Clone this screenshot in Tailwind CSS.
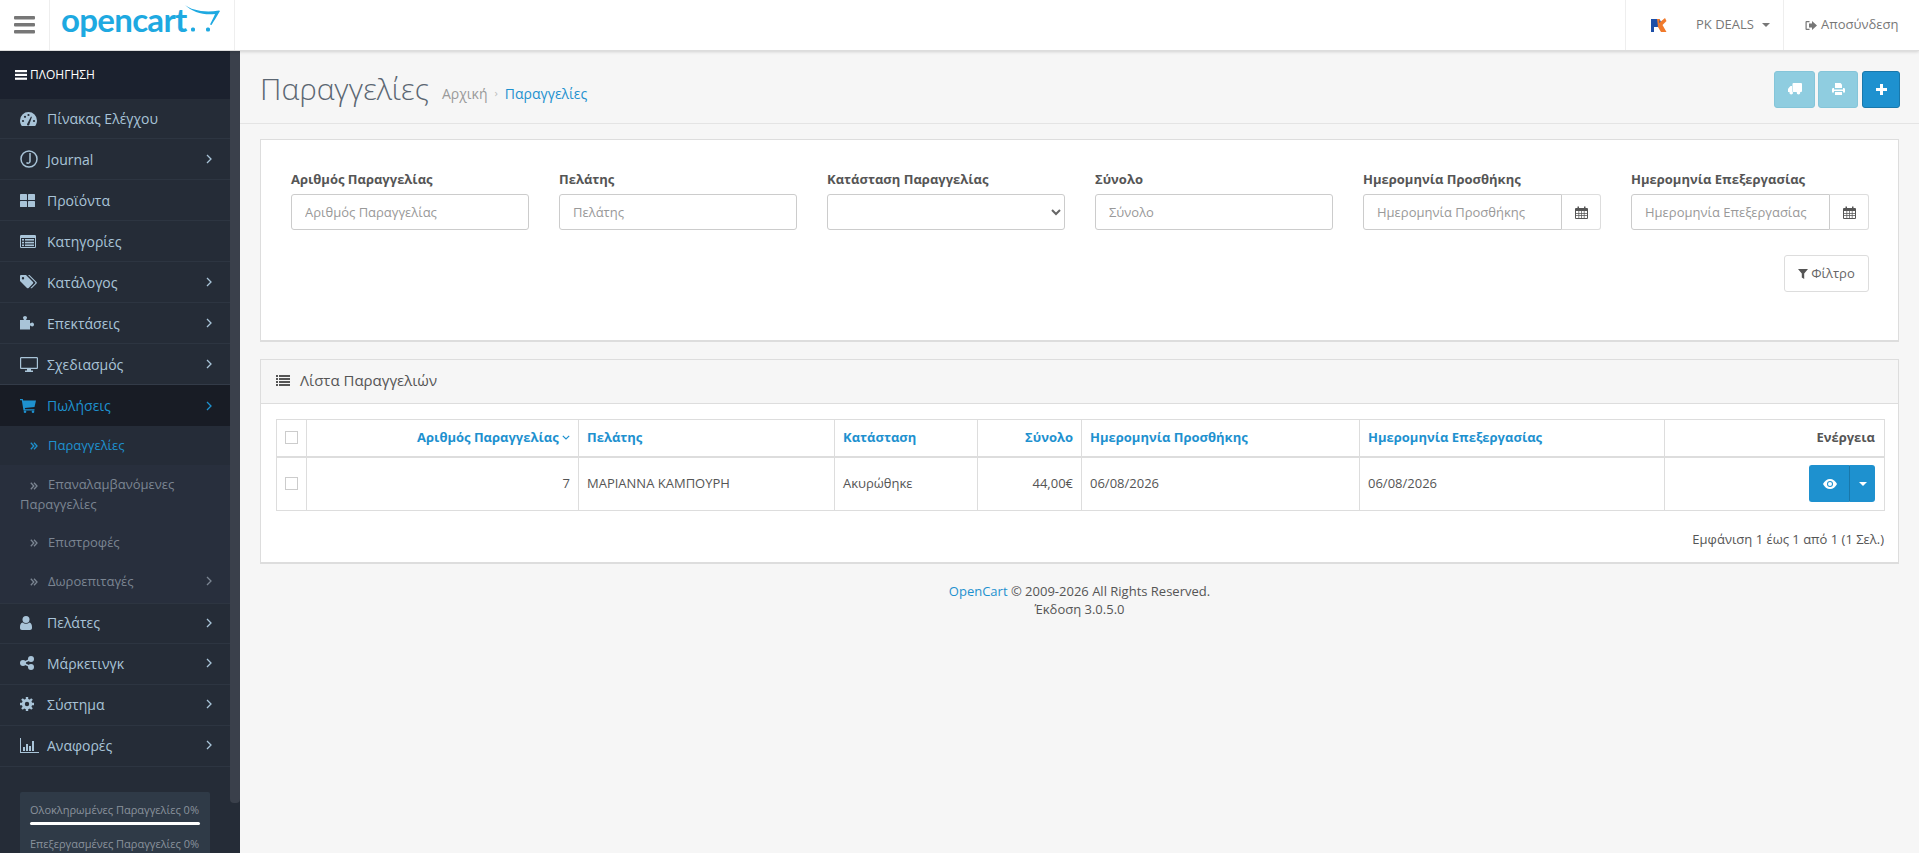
<!DOCTYPE html>
<html lang="el">
<head>
  <meta charset="UTF-8">
  <meta name="viewport" content="width=device-width, initial-scale=1.0">
  <title>Παραγγελίες</title>
  <script src="https://cdn.jsdelivr.net/npm/@tailwindcss/browser@4"></script>
</head>
<body class="bg-[#f6f6f6] font-['Open_Sans',sans-serif] text-[13px] text-[#666] h-[853px] overflow-hidden">
  <!-- top bar -->
  <header class="h-[51px] bg-white border-b border-[#ddd] shadow-[0_1px_3px_rgba(0,0,0,0.15)] flex items-stretch relative z-10">
    <div class="w-[50px] border-r border-[#eee] flex items-center justify-center">
      <svg width="21" height="18" viewBox="0 0 21 18" fill="#777"><rect y="0" width="21" height="3.6" rx="1"/><rect y="7" width="21" height="3.6" rx="1"/><rect y="14" width="21" height="3.6" rx="1"/></svg>
    </div>
    <div class="w-[185px] border-r border-[#eee] flex items-start pl-[11px] relative">
      <span class="font-['Lato',sans-serif] font-bold text-[33px] leading-[38px] text-[#1ea9e1] tracking-[-0.7px]">opencart</span>
      <svg class="absolute left-[134px] top-[4px]" width="37" height="29" viewBox="0 0 37 29" fill="#1ea9e1"><path d="M1 1 C7 6 20 9 35 6.500 L36 7 C33 12 30 17 27.500 21 L26 20.500 C28 16 30 13 31 10 C20 11.500 8 8 1 1Z"/><rect x="7" y="23.500" width="4" height="4" rx="1.500"/><rect x="22" y="23.500" width="4" height="4" rx="1.500"/></svg>
    </div>
    <div class="ml-auto flex items-stretch">
      <div class="w-[159px] border-l border-r border-[#eee] flex items-center pl-[24px]">
        <svg width="17" height="16" viewBox="0 0 17 16"><path d="M1 2h6a3.500 3.500 0 0 1 0 8H4v5H1z" fill="#1d4fa8"/><path d="M7 2 L10 2 L9 6 L15 1 L16.500 4 L12.500 8 L16.500 15 H11 L8 10 Z" fill="#f07a2c"/></svg>
        <span class="ml-[29px] text-[13px] text-[#777]">PK DEALS</span>
        <span class="ml-[8px] w-0 h-0 border-x-[4px] border-x-transparent border-t-[4px] border-t-[#777]"></span>
      </div>
      <div class="w-[135px] flex items-center pl-[21px] text-[13px] text-[#777]">
        <svg class="mr-[4px]" width="12" height="11" viewBox="0 0 12 11" fill="#777"><path d="M1.500 1h3v1.200h-2.800v6.600h2.800V10h-3A1 1 0 0 1 .5 9V2a1 1 0 0 1 1-1z"/><path d="M4 3.500h3V1l5 4.500L7 10V7.500H4z"/></svg>
        Αποσύνδεση
      </div>
    </div>
  </header>

  <div class="flex h-[802px]">
    <!-- sidebar -->
    <aside class="w-[240px] shrink-0 bg-[#252c37] relative overflow-hidden">
      <div class="w-[230px]">
        <div class="h-[48px] bg-[#1b212e] flex items-center pl-[15px] text-white text-[12px]">
          <svg class="mr-[3px]" width="12" height="10" viewBox="0 0 12 10" fill="#fff"><rect width="12" height="2.200"/><rect y="3.800" width="12" height="2.200"/><rect y="7.600" width="12" height="2.200"/></svg>
          ΠΛΟΗΓΗΣΗ
        </div>
        <ul class="text-[14px] text-[#a9c4d8]">
          <li class="h-[40px] border-b border-[#2d3541] flex items-center">
            <span class="w-[47px] pl-[20px] shrink-0"><svg width="17" height="14" viewBox="0 0 17 14" fill="#a9c4d8"><path d="M8.500 0A8.500 8.500 0 0 0 0 8.500C0 10.500.6 12.300 1.800 14h13.400c1.200-1.700 1.800-3.500 1.800-5.500A8.500 8.500 0 0 0 8.500 0z"/><g fill="#252c37"><circle cx="3" cy="9" r="1.100"/><circle cx="5" cy="4.800" r="1.100"/><circle cx="8.500" cy="3" r="1.100"/><circle cx="14" cy="9" r="1.100"/><path d="M7.400 11.500 11 4.500l.9.4-2.500 7.300a1.200 1.200 0 1 1-2-.7z"/></g></svg></span>
            <span>Πίνακας Ελέγχου</span>
          </li>
          <li class="h-[41px] border-b border-[#2d3541] flex items-center">
            <span class="w-[47px] pl-[20px] shrink-0"><svg width="18" height="18" viewBox="0 0 18 18" fill="none" stroke="#a9c4d8"><circle cx="9" cy="9" r="8" stroke-width="1.500"/><path d="M10 3v8.500a2 2 0 0 1-3.500 1" stroke-width="1.500"/></svg></span>
            <span>Journal</span>
            <svg class="ml-auto mr-[18px]" width="6" height="10" viewBox="0 0 6 10" fill="none" stroke="#a9c4d8" stroke-width="1.300"><path d="M1 1l4 4-4 4"/></svg>
          </li>
          <li class="h-[41px] border-b border-[#2d3541] flex items-center">
            <span class="w-[47px] pl-[20px] shrink-0"><svg width="15" height="13" viewBox="0 0 15 13" fill="#a9c4d8"><rect width="7" height="6" rx=".6"/><rect x="8" width="7" height="6" rx=".6"/><rect y="7" width="7" height="6" rx=".6"/><rect x="8" y="7" width="7" height="6" rx=".6"/></svg></span>
            <span>Προϊόντα</span>
          </li>
          <li class="h-[41px] border-b border-[#2d3541] flex items-center">
            <span class="w-[47px] pl-[20px] shrink-0"><svg width="16" height="13" viewBox="0 0 16 13" fill="#a9c4d8"><path d="M1.200 0h13.600A1.200 1.200 0 0 1 16 1.200v10.600a1.200 1.200 0 0 1-1.200 1.200H1.200A1.200 1.200 0 0 1 0 11.800V1.200A1.200 1.200 0 0 1 1.200 0z"/><g fill="#252c37"><rect x="1" y="3" width="14" height="9"/></g><g fill="#a9c4d8"><rect x="2" y="4" width="2" height="1.600"/><rect x="2" y="6.800" width="2" height="1.600"/><rect x="2" y="9.500" width="2" height="1.600"/><rect x="5" y="4" width="9" height="1.600"/><rect x="5" y="6.800" width="9" height="1.600"/><rect x="5" y="9.500" width="9" height="1.600"/></g></svg></span>
            <span>Κατηγορίες</span>
          </li>
          <li class="h-[41px] border-b border-[#2d3541] flex items-center">
            <span class="w-[47px] pl-[20px] shrink-0"><svg width="17" height="14" viewBox="0 0 17 14" fill="#a9c4d8"><path d="M1 0h5l7 7a1.200 1.200 0 0 1 0 1.600L8.600 13a1.200 1.200 0 0 1-1.600 0L0 6V1a1 1 0 0 1 1-1zm2 2.100a1.200 1.200 0 1 0 0 2.400 1.200 1.200 0 0 0 0-2.400z" fill-rule="evenodd"/><path d="M8 0h1.500l7 7a1.200 1.200 0 0 1 0 1.600L12 13a1.200 1.200 0 0 1-1.500.1L15 8.600a1.200 1.200 0 0 0 0-1.600z"/></svg></span>
            <span>Κατάλογος</span>
            <svg class="ml-auto mr-[18px]" width="6" height="10" viewBox="0 0 6 10" fill="none" stroke="#a9c4d8" stroke-width="1.300"><path d="M1 1l4 4-4 4"/></svg>
          </li>
          <li class="h-[41px] border-b border-[#2d3541] flex items-center">
            <span class="w-[47px] pl-[20px] shrink-0"><svg width="15" height="14" viewBox="0 0 15 14" fill="#a9c4d8"><path d="M0 4h3.500c.3 0 .5-.3.3-.6C3.300 2.800 3 2.300 3 1.800 3 .7 4 0 5 0s2 .7 2 1.800c0 .5-.3 1-.8 1.600-.2.300 0 .6.300.6H10v3c0 .3.300.5.600.3.600-.5 1.100-.8 1.600-.8 1.100 0 1.800 1 1.800 2s-.7 2-1.800 2c-.5 0-1-.3-1.600-.8-.3-.2-.6 0-.6.300v3.500H0z"/></svg></span>
            <span>Επεκτάσεις</span>
            <svg class="ml-auto mr-[18px]" width="6" height="10" viewBox="0 0 6 10" fill="none" stroke="#a9c4d8" stroke-width="1.300"><path d="M1 1l4 4-4 4"/></svg>
          </li>
          <li class="h-[41px] border-b border-[#333b48] flex items-center">
            <span class="w-[47px] pl-[20px] shrink-0"><svg width="18" height="15" viewBox="0 0 18 15" fill="#a9c4d8"><path d="M1.300 0h15.400C17.400 0 18 .6 18 1.300v9.400c0 .7-.6 1.300-1.300 1.300H11v1.500h2V15H5v-1.500h2V12H1.300C.6 12 0 11.400 0 10.700V1.300C0 .6.600 0 1.300 0zM1.200 1.200v9.600h15.600V1.200z" fill-rule="evenodd"/></svg></span>
            <span>Σχεδιασμός</span>
            <svg class="ml-auto mr-[18px]" width="6" height="10" viewBox="0 0 6 10" fill="none" stroke="#a9c4d8" stroke-width="1.300"><path d="M1 1l4 4-4 4"/></svg>
          </li>
          <li class="h-[41px] bg-[#181c25] text-[#1e91cf] flex items-center">
            <span class="w-[47px] pl-[20px] shrink-0"><svg width="16" height="14" viewBox="0 0 16 14" fill="#1e91cf"><path d="M0 0h2.800l.4 1.500H16l-1.500 6.500-9.700 1 .3 1.200h9.400v1.300H3.500L1.800 1.300H0z"/><circle cx="5" cy="12.700" r="1.300"/><circle cx="13" cy="12.700" r="1.300"/></svg></span>
            <span>Πωλήσεις</span>
            <svg class="ml-auto mr-[18px]" width="6" height="10" viewBox="0 0 6 10" fill="none" stroke="#1e91cf" stroke-width="1.300"><path d="M1 1l4 4-4 4"/></svg>
          </li>
          <li class="bg-[#252c38] h-[39px] flex items-center text-[13px] text-[#1e91cf]">
            <span class="w-[48px] pl-[30px] shrink-0"><svg width="8" height="8" viewBox="0 0 8 8" fill="none" stroke="#1e91cf" stroke-width="1.300"><path d="M.8 .8 3.800 4 .8 7.200M4 .8 7 4 4 7.200"/></svg></span>
            <span>Παραγγελίες</span>
          </li>
          <li class="bg-[#282f3d] text-[13px] text-[#7b8592] leading-[20px] pl-[20px] pr-[10px] pt-[9px] pb-[10px]">
            <span class="inline-block w-[28px] pl-[10px]"><svg class="inline" width="8" height="8" viewBox="0 0 8 8" fill="none" stroke="#7b8592" stroke-width="1.300"><path d="M.8 .8 3.800 4 .8 7.200M4 .8 7 4 4 7.200"/></svg></span>Επαναλαμβανόμενες Παραγγελίες
          </li>
          <li class="bg-[#282f3d] h-[39px] pb-[2px] flex items-center text-[13px] text-[#7b8592]">
            <span class="w-[48px] pl-[30px] shrink-0"><svg width="8" height="8" viewBox="0 0 8 8" fill="none" stroke="#7b8592" stroke-width="1.300"><path d="M.8 .8 3.800 4 .8 7.200M4 .8 7 4 4 7.200"/></svg></span>
            <span>Επιστροφές</span>
          </li>
          <li class="bg-[#282f3d] h-[40px] pb-[2px] flex items-center text-[13px] text-[#7b8592]">
            <span class="w-[48px] pl-[30px] shrink-0"><svg width="8" height="8" viewBox="0 0 8 8" fill="none" stroke="#7b8592" stroke-width="1.300"><path d="M.8 .8 3.800 4 .8 7.200M4 .8 7 4 4 7.200"/></svg></span>
            <span>Δωροεπιταγές</span>
            <svg class="ml-auto mr-[18px] mb-[3px]" width="6" height="10" viewBox="0 0 6 10" fill="none" stroke="#7b8592" stroke-width="1.300"><path d="M1 1l4 4-4 4"/></svg>
          </li>
          <li class="h-[41px] pb-[2px] border-y border-[#2d3541] flex items-center">
            <span class="w-[47px] pl-[20px] shrink-0"><svg width="12" height="14" viewBox="0 0 12 14" fill="#a9c4d8"><circle cx="6" cy="3.500" r="3.500"/><path d="M2.500 6.500c1 .8 2.200 1.200 3.500 1.200s2.500-.4 3.500-1.200C11 6.800 12 8.500 12 11v1c0 1.200-.8 2-2 2H2c-1.200 0-2-.8-2-2v-1c0-2.500 1-4.200 2.500-4.500z"/></svg></span>
            <span>Πελάτες</span>
            <svg class="ml-auto mr-[18px]" width="6" height="10" viewBox="0 0 6 10" fill="none" stroke="#a9c4d8" stroke-width="1.300"><path d="M1 1l4 4-4 4"/></svg>
          </li>
          <li class="h-[41px] pb-[2px] border-b border-[#2d3541] flex items-center">
            <span class="w-[47px] pl-[20px] shrink-0"><svg width="14" height="14" viewBox="0 0 14 14" fill="#a9c4d8"><circle cx="3" cy="7" r="3"/><circle cx="11" cy="3" r="3"/><circle cx="11" cy="11" r="3"/><path d="M3 7l8-4M3 7l8 4" stroke="#a9c4d8" stroke-width="1.500"/></svg></span>
            <span>Μάρκετινγκ</span>
            <svg class="ml-auto mr-[18px]" width="6" height="10" viewBox="0 0 6 10" fill="none" stroke="#a9c4d8" stroke-width="1.300"><path d="M1 1l4 4-4 4"/></svg>
          </li>
          <li class="h-[41px] pb-[2px] border-b border-[#2d3541] flex items-center">
            <span class="w-[47px] pl-[20px] shrink-0"><svg width="14" height="14" viewBox="0 0 14 14"><circle cx="7" cy="7" r="5.200" fill="#a9c4d8"/><path d="M7 0v14M0 7h14M2 2l10 10M12 2 2 12" stroke="#a9c4d8" stroke-width="2.400"/><circle cx="7" cy="7" r="2.200" fill="#252c37"/></svg></span>
            <span>Σύστημα</span>
            <svg class="ml-auto mr-[18px]" width="6" height="10" viewBox="0 0 6 10" fill="none" stroke="#a9c4d8" stroke-width="1.300"><path d="M1 1l4 4-4 4"/></svg>
          </li>
          <li class="h-[41px] pb-[2px] border-b border-[#2d3541] flex items-center">
            <span class="w-[47px] pl-[20px] shrink-0"><svg width="19" height="15" viewBox="0 0 19 15" fill="#a9c4d8"><path d="M0 0h1v14h18v1H0z"/><rect x="3" y="9" width="2" height="4"/><rect x="6" y="6" width="2" height="7"/><rect x="9" y="8" width="2" height="5"/><rect x="12" y="3" width="2" height="10"/></svg></span>
            <span>Αναφορές</span>
            <svg class="ml-auto mr-[18px]" width="6" height="10" viewBox="0 0 6 10" fill="none" stroke="#a9c4d8" stroke-width="1.300"><path d="M1 1l4 4-4 4"/></svg>
          </li>
        </ul>
        <div class="mt-[25px] mx-[20px] w-[190px] bg-[#2f3a47] rounded-[2px] px-[10px] pt-[10px] h-[120px] text-[11px] text-[#8a929c]">
          <div class="leading-[16px] whitespace-nowrap">Ολοκληρωμένες Παραγγελίες 0%</div>
          <div class="h-[3px] bg-white rounded-[2px] mt-[4px] mb-[11px]"></div>
          <div class="leading-[16px] whitespace-nowrap">Επεξεργασμένες Παραγγελίες 0%</div>
        </div>
      </div>
      <div class="absolute right-0 top-0 w-[10px] h-[752px] bg-[#3a404b] rounded-b-[4px]"></div>
    </aside>

    <!-- main -->
    <main class="flex-1 min-w-0">
      <div class="h-[73px] border-b border-[#e4e4e4] flex items-center pl-[20px] pr-[19px]">
        <h1 class="text-[30px] font-light text-[#5b6672] leading-[40px] mt-[4px]">Παραγγελίες</h1>
        <div class="ml-[13px] mt-[12px] text-[14px] flex items-center">
          <span class="text-[#9a9a9a]">Αρχική</span>
          <span class="mx-[7px] text-[#bbb] text-[11px]">›</span>
          <span class="text-[#1e91cf]">Παραγγελίες</span>
        </div>
        <div class="ml-auto flex gap-[3px] mt-[4px]">
          <button class="w-[41px] h-[37px] rounded-[3px] bg-[#8fcde0] border border-[#84c5d9] flex items-center justify-center">
            <svg width="14" height="12" viewBox="0 0 14 12" fill="#fff"><rect x="4.500" y="0" width="9.500" height="9" rx="1"/><path d="M4 3H2.500L0 5.800V9h4z"/><circle cx="3.200" cy="9.800" r="1.800"/><circle cx="10.500" cy="9.800" r="1.800"/></svg>
          </button>
          <button class="w-[40px] h-[37px] rounded-[3px] bg-[#8fcde0] border border-[#84c5d9] flex items-center justify-center">
            <svg width="13" height="12" viewBox="0 0 13 12" fill="#fff"><path d="M3 0h5.500L10 1.500V5H3z"/><path d="M1.200 5H2v1.500h9V5h.8A1.200 1.200 0 0 1 13 6.200V9.500h-2V8H2v1.500H0V6.200A1.200 1.200 0 0 1 1.200 5z"/><rect x="3" y="9" width="7" height="3"/></svg>
          </button>
          <button class="ml-[1px] w-[38px] h-[37px] rounded-[3px] bg-[#1e91cf] border border-[#1978ab] flex items-center justify-center">
            <svg width="11" height="11" viewBox="0 0 11 11" fill="#fff"><path d="M4 0h3v4h4v3H7v4H4V7H0V4h4z"/></svg>
          </button>
        </div>
      </div>

      <div class="pl-[20px] pr-[20px] pt-[15px]">
        <!-- filter card -->
        <section class="bg-white border border-[#ddd] border-b-2 h-[203px] p-[15px]">
          <div class="grid grid-cols-[repeat(6,268px)] pt-[15px] text-[13px]">
            <div class="px-[15px]">
              <label class="block font-bold text-[#555] text-[13px] leading-[18px] mb-[6px]">Αριθμός Παραγγελίας</label>
              <input class="w-[238px] h-[36px] border border-[#ccc] rounded-[3px] px-[13px] text-[13px] placeholder:text-[#999]" placeholder="Αριθμός Παραγγελίας">
            </div>
            <div class="px-[15px]">
              <label class="block font-bold text-[#555] text-[13px] leading-[18px] mb-[6px]">Πελάτης</label>
              <input class="w-[238px] h-[36px] border border-[#ccc] rounded-[3px] px-[13px] text-[13px] placeholder:text-[#999]" placeholder="Πελάτης">
            </div>
            <div class="px-[15px]">
              <label class="block font-bold text-[#555] text-[13px] leading-[18px] mb-[6px]">Κατάσταση Παραγγελίας</label>
              <select class="w-[238px] h-[36px] border border-[#ccc] rounded-[3px] px-[13px] bg-white"><option></option></select>
            </div>
            <div class="px-[15px]">
              <label class="block font-bold text-[#555] text-[13px] leading-[18px] mb-[6px]">Σύνολο</label>
              <input class="w-[238px] h-[36px] border border-[#ccc] rounded-[3px] px-[13px] text-[13px] placeholder:text-[#999]" placeholder="Σύνολο">
            </div>
            <div class="px-[15px]">
              <label class="block font-bold text-[#555] text-[13px] leading-[18px] mb-[6px] whitespace-nowrap">Ημερομηνία Προσθήκης</label>
              <div class="flex w-[238px]">
                <input class="w-[199px] h-[36px] border border-[#ccc] rounded-l-[3px] px-[13px] text-[13px] placeholder:text-[#999]" placeholder="Ημερομηνία Προσθήκης">
                <span class="flex-1 h-[36px] border border-l-0 border-[#ddd] rounded-r-[3px] flex items-center justify-center">
                  <svg width="13" height="13" viewBox="0 0 13 13" fill="#555"><path d="M1 2h1.500V.5H4V2h5V.5h1.500V2H12a1 1 0 0 1 1 1v9a1 1 0 0 1-1 1H1a1 1 0 0 1-1-1V3a1 1 0 0 1 1-1zm0 3v7h11V5z" fill-rule="evenodd"/><path d="M1 7h11v.7H1zM1 9.300h11v.7H1zM3.500 5h.7v7h-.7zM6.100 5h.7v7h-.7zM8.800 5h.7v7h-.7z"/></svg>
                </span>
              </div>
            </div>
            <div class="px-[15px]">
              <label class="block font-bold text-[#555] text-[13px] leading-[18px] mb-[6px] whitespace-nowrap">Ημερομηνία Επεξεργασίας</label>
              <div class="flex w-[238px]">
                <input class="w-[199px] h-[36px] border border-[#ccc] rounded-l-[3px] px-[13px] text-[13px] placeholder:text-[#999]" placeholder="Ημερομηνία Επεξεργασίας">
                <span class="flex-1 h-[36px] border border-l-0 border-[#ddd] rounded-r-[3px] flex items-center justify-center">
                  <svg width="13" height="13" viewBox="0 0 13 13" fill="#555"><path d="M1 2h1.500V.5H4V2h5V.5h1.500V2H12a1 1 0 0 1 1 1v9a1 1 0 0 1-1 1H1a1 1 0 0 1-1-1V3a1 1 0 0 1 1-1zm0 3v7h11V5z" fill-rule="evenodd"/><path d="M1 7h11v.7H1zM1 9.300h11v.7H1zM3.500 5h.7v7h-.7zM6.100 5h.7v7h-.7zM8.800 5h.7v7h-.7z"/></svg>
                </span>
              </div>
            </div>
          </div>
          <div class="flex justify-end mt-[25px] pr-[14px]">
            <button class="w-[85px] h-[37px] border border-[#ddd] rounded-[3px] bg-white text-[13px] text-[#666] flex items-center justify-center">
              <svg class="mr-[3px]" width="10" height="10" viewBox="0 0 10 10" fill="#555"><path d="M0 0h10L6.200 4.500V10L3.800 8.500v-4z"/></svg>
              Φίλτρο
            </button>
          </div>
        </section>

        <!-- order list card -->
        <section class="bg-white border border-[#ddd] border-b-2 mt-[17px] h-[205px]">
          <div class="h-[44px] pb-[2px] bg-[#f6f6f6] border-b border-[#ddd] flex items-center pl-[15px] text-[15px] text-[#555]">
            <svg class="mr-[10px]" width="14" height="11" viewBox="0 0 14 11" fill="#555"><rect width="2" height="2"/><rect y="3" width="2" height="2"/><rect y="6" width="2" height="2"/><rect y="9" width="2" height="2"/><rect x="3" width="11" height="2"/><rect x="3" y="3" width="11" height="2"/><rect x="3" y="6" width="11" height="2"/><rect x="3" y="9" width="11" height="2"/></svg>
            Λίστα Παραγγελιών
          </div>
          <div class="px-[15px] pt-[15px]">
            <table class="w-[1608px] table-fixed border-collapse text-[13px] text-[#555]">
              <colgroup>
                <col class="w-[30px]"><col class="w-[272px]"><col class="w-[256px]"><col class="w-[143px]"><col class="w-[104px]"><col class="w-[278px]"><col class="w-[305px]"><col class="w-[220px]">
              </colgroup>
              <thead>
                <tr class="h-[37px] font-bold text-[#1e91cf]">
                  <td class="border border-[#ddd] border-b-2 px-[6px]"><input type="checkbox" class="appearance-none block w-[13px] h-[13px] border border-[#ccc] mx-auto bg-white"></td>
                  <td class="border border-[#ddd] border-b-2 px-[8px] text-right whitespace-nowrap">Αριθμός Παραγγελίας <svg class="inline mb-[2px]" width="8" height="5" viewBox="0 0 8 5" fill="none" stroke="#1e91cf" stroke-width="1.200"><path d="M.8 .8 4 4 7.200 .8"/></svg></td>
                  <td class="border border-[#ddd] border-b-2 px-[8px]">Πελάτης</td>
                  <td class="border border-[#ddd] border-b-2 px-[8px]">Κατάσταση</td>
                  <td class="border border-[#ddd] border-b-2 px-[8px] text-right">Σύνολο</td>
                  <td class="border border-[#ddd] border-b-2 px-[8px]">Ημερομηνία Προσθήκης</td>
                  <td class="border border-[#ddd] border-b-2 px-[8px]">Ημερομηνία Επεξεργασίας</td>
                  <td class="border border-[#ddd] border-b-2 pl-[8px] pr-[9px] text-right text-[#555]">Ενέργεια</td>
                </tr>
              </thead>
              <tbody>
                <tr class="h-[54px]">
                  <td class="border border-[#ddd] px-[6px]"><input type="checkbox" class="appearance-none block w-[13px] h-[13px] border border-[#ccc] mx-auto bg-white"></td>
                  <td class="border border-[#ddd] px-[8px] text-right">7</td>
                  <td class="border border-[#ddd] px-[8px]">ΜΑΡΙΑΝΝΑ ΚΑΜΠΟΥΡΗ</td>
                  <td class="border border-[#ddd] px-[8px]">Ακυρώθηκε</td>
                  <td class="border border-[#ddd] px-[8px] text-right">44,00€</td>
                  <td class="border border-[#ddd] px-[8px]">06/08/2026</td>
                  <td class="border border-[#ddd] px-[8px]">06/08/2026</td>
                  <td class="border border-[#ddd] pl-[8px] pr-[9px]">
                    <div class="flex justify-end">
                      <button class="w-[41px] h-[37px] bg-[#1e91cf] border border-[#1e91cf] border-r-[#1978ab] rounded-l-[3px] flex items-center justify-center">
                        <svg width="14" height="10" viewBox="0 0 14 10"><path d="M7 0c3 0 5.500 2 7 5-1.500 3-4 5-7 5S1.500 8 0 5c1.500-3 4-5 7-5z" fill="#fff"/><circle cx="7" cy="5" r="3" fill="#1e91cf"/><circle cx="7" cy="5" r="2" fill="#fff"/></svg>
                      </button>
                      <button class="w-[25px] h-[37px] bg-[#1e91cf] rounded-r-[3px] flex items-center justify-center">
                        <span class="w-0 h-0 border-x-[4px] border-x-transparent border-t-[4px] border-t-white"></span>
                      </button>
                    </div>
                  </td>
                </tr>
              </tbody>
            </table>
            <div class="text-right text-[13px] text-[#555] mt-[19px] -mr-[1px]">Εμφάνιση 1 έως 1 από 1 (1 Σελ.)</div>
          </div>
        </section>

        <footer class="text-center text-[13px] text-[#555] mt-[18px] leading-[18px]">
          <div><span class="text-[#1e91cf]">OpenCart</span> © 2009-2026 All Rights Reserved.</div>
          <div>Έκδοση 3.0.5.0</div>
        </footer>
      </div>
    </main>
  </div>
</body>
</html>
